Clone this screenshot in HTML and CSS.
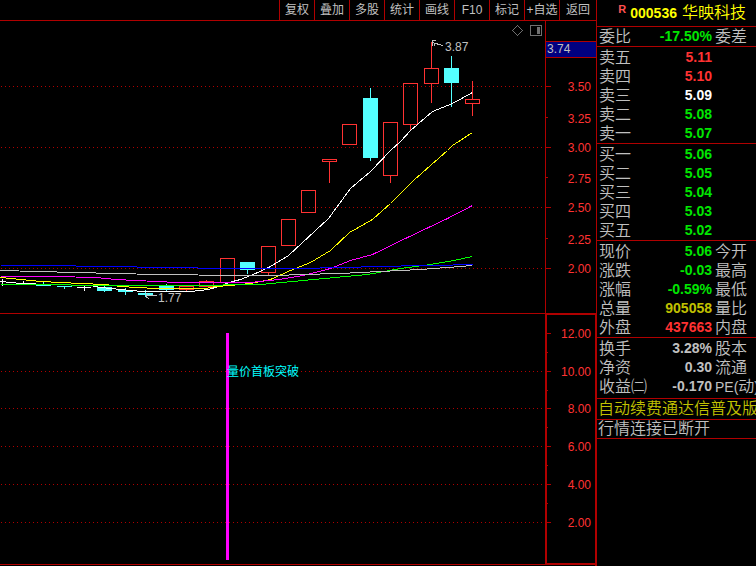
FILE: index.html
```
<!DOCTYPE html>
<html lang="zh-CN">
<head>
<meta charset="utf-8">
<title>000536 华映科技</title>
<link rel="stylesheet" href="styles.css">
</head>
<body>
<div class="app">
<main class="main">
<nav class="toolbar">
<button>复权</button><button>叠加</button><button>多股</button><button>统计</button><button>画线</button><button>F10</button><button>标记</button><button>+自选</button><button>返回</button>
</nav>
<svg class="chart" viewBox="0 21 596 294" role="img" aria-label="K线">
<g class="grid"><path d="M1 86.5H545M1 147.5H545M1 207.5H545M1 268.5H545"/></g>
<g class="frame"><path d="M545.5 21V313M0 313.5H545M546 86.5h5M546 117.5h2M546 147.5h5M546 177.5h2M546 207.5h5M546 238.5h2M546 268.5h5"/><path class="thick" d="M545 314H596"/></g>
<rect class="cursor-box" x="546" y="42" width="50" height="15"/>
<path class="frame" d="M546 41.5H596M546 57.5H596"/>
<g class="candle up">
<path d="M220.5 258.5h14v24h-14zM261.5 246.5h14v26h-14zM268.5 273v2M281.5 219.5h14v26h-14zM301.5 190.5h14v22h-14zM322.5 159.5h14v2h-14zM329.5 162v21M342.5 124.5h14v20h-14zM383.5 122.5h14v53h-14zM390.5 176v7M403.5 83.5h14v41h-14zM410.5 125v6M424.5 68.5h14v15h-14zM431.5 42v26M431.5 84v19M465.5 99.5h14v4h-14zM472.5 81v18M472.5 104v12M179.5 286.5h14v3h-14zM186.5 290v1M199.5 281.5h14v5h-14zM206.5 280v1"/>
</g>
<g class="candle down">
<path class="body" d="M240 262h15v8h-15zM363 98h15v60h-15zM444 68h15v15h-15zM36 284h15v2h-15zM57 286h15v1h-15zM97 287h15v4h-15zM118 290h15v2h-15zM138 293h15v2h-15zM159 286h15v4h-15z"/>
<path class="wick" d="M247.5 270v4M370.5 88v73M451.5 56v51M43.5 281v3M64.5 286v3M104.5 286v6M125.5 288v7M145.5 290v7M166.5 284v7"/>
</g>
<path class="candle flat" d="M2.500 279v7M16 283.500h14M23.500 281v4M77 287.500h14M84.500 285v6"/>
<g transform="translate(0.5 0.5)">
<polyline class="ma white" points="0,281 10,282 20,283 50,284 90,285 100,287 110,288 120,289 130,290 142,291 190,291 208,289 218,286 232,281 240,279 255,273 270,266 288,255 328,218 350,188 370,171 390,150 400,141 410,130 432,111 452,103 472,92"/>
<polyline class="ma yellow" points="0,277 20,279 40,281 60,282 80,283 105,284 120,286 136,287 156,288 205,288 215,286 230,285 250,283 270,279 290,270 310,262 330,250 349,232 372,219 390,203 413,180 447,150 452,145 472,132"/>
<polyline class="ma magenta" points="0,276 54,276 95,277 115,279 156,281 177,282 250,282 278,279 303,275 330,268 350,260 372,254 407,237 447,218 472,205"/>
<polyline class="ma green" points="0,284 50,284 90,285 215,285 230,284 260,284 313,279 367,274 400,268 430,264 453,260 472,256"/>
<polyline class="ma silver" points="0,270 75,272 115,273 156,274 238,275 278,275 300,274 340,273 380,271 420,269 460,266 472,265"/>
<path class="ma blue" d="M0 265H75M75 266H136M136 267H197M197 268H319M319 267H360M360 266H400M400 265H452M452 264H472"/>
</g>
<path class="leader" d="M432 42.500L443 45.500M432 46V40.500h4M434 44l1 2M146 295.500h11M146 293v5M147 297l2 2"/>
<text class="note" x="445" y="51">3.87</text>
<text class="note" x="158" y="302">1.77</text>
<text class="note" x="547" y="53">3.74</text>
<g class="tool-icons"><path d="M517.500 25.500l5 5l-5 5l-5-5z"/><rect x="530.500" y="25.500" width="11" height="10" rx="1"/><path class="fill" d="M537 27h3v7h-3z"/></g>
<g class="scale"><text x="591" y="91">3.50</text><text x="591" y="123">3.25</text><text x="591" y="152">3.00</text><text x="591" y="183">2.75</text><text x="591" y="212">2.50</text><text x="591" y="244">2.25</text><text x="591" y="273">2.00</text></g>
</svg>
<svg class="chart" viewBox="0 315 596 251" role="img" aria-label="量价首板突破">
<g class="grid"><path d="M1 371.5H545M1 408.5H545M1 446.5H545M1 484.5H545M1 522.5H545"/></g>
<g class="frame"><path d="M0 564.5H545M547 333.5h4M547 371.5h4M547 408.5h4M547 446.5h4M547 484.5h4M547 522.5h4M547 352.5h1M547 390.5h1M547 427.5h1M547 465.5h1M547 503.5h1"/><path class="thick" d="M546 315V564M545 564H596"/></g>
<rect class="signal" x="226" y="333" width="3" height="227"/>
<text class="signal-label" x="227" y="376">量价首板突破</text>
<g class="scale"><text x="591" y="338">12.00</text><text x="591" y="376">10.00</text><text x="591" y="413">8.00</text><text x="591" y="451">6.00</text><text x="591" y="489">4.00</text><text x="591" y="527">2.00</text></g>
<path class="frame" d="M595.500 315V566"/>
</svg>
</main>
<aside class="side">
<header class="stock"><sup>R</sup><b>000536</b><span>华映科技</span></header>
<section class="block ratio"><table><tr><th>委比</th><td class="green">-17.50%</td><th>委差</th></tr></table></section>
<section class="block"><table>
<tr><th>卖五</th><td class="red">5.11</td><th></th></tr>
<tr><th>卖四</th><td class="red">5.10</td><th></th></tr>
<tr><th>卖三</th><td class="white">5.09</td><th></th></tr>
<tr><th>卖二</th><td class="green">5.08</td><th></th></tr>
<tr><th>卖一</th><td class="green">5.07</td><th></th></tr>
</table></section>
<section class="block"><table>
<tr><th>买一</th><td class="green">5.06</td><th></th></tr>
<tr><th>买二</th><td class="green">5.05</td><th></th></tr>
<tr><th>买三</th><td class="green">5.04</td><th></th></tr>
<tr><th>买四</th><td class="green">5.03</td><th></th></tr>
<tr><th>买五</th><td class="green">5.02</td><th></th></tr>
</table></section>
<section class="block"><table>
<tr><th>现价</th><td class="green">5.06</td><th>今开</th></tr>
<tr><th>涨跌</th><td class="green">-0.03</td><th>最高</th></tr>
<tr><th>涨幅</th><td class="green">-0.59%</td><th>最低</th></tr>
<tr><th>总量</th><td class="gold">905058</td><th>量比</th></tr>
<tr><th>外盘</th><td class="red">437663</td><th>内盘</th></tr>
</table></section>
<section class="block finance"><table>
<tr><th>换手</th><td>3.28%</td><th>股本</th></tr>
<tr><th>净资</th><td>0.30</td><th>流通</th></tr>
<tr><th>收益㈡</th><td>-0.170</td><th><span class="latin">PE(</span>动<span class="latin">)</span></th></tr>
</table></section>
<p class="message gold">自动续费通达信普及版</p>
<p class="message status">行情连接已断开</p>
</aside>
</div>
</body>
</html>
```
FILE: styles.css
```
* { box-sizing: border-box; }
body {
  margin: 0;
  background: #000;
  color: #c0c0c0;
  font-family: "Liberation Sans", "Noto Sans CJK SC", sans-serif;
  overflow: hidden;
}
.app {
  display: grid;
  grid-template-columns: minmax(0, 1fr) 160px;
  min-height: 100vh;
}
.toolbar {
  display: flex;
  justify-content: flex-end;
  height: 21px;
  border-bottom: 1px solid #b00000;
}
.toolbar button {
  width: 35px;
  padding: 0;
  border: 0;
  border-left: 1px solid #b00000;
  background: none;
  color: #c0c0c0;
  font: 400 12px/20px "Liberation Sans", "Noto Sans CJK SC", sans-serif;
  white-space: nowrap;
}
.toolbar button:last-child { width: 37px; }
.chart { display: block; width: 100%; height: auto; }
.chart path, .chart polyline, .chart rect { fill: none; shape-rendering: crispEdges; }
.grid path { stroke: #b00000; stroke-dasharray: 1 3; }
.frame { stroke: #b00000; }
.frame .thick { stroke-width: 2; }
.chart .cursor-box { fill: #000080; }
.up { stroke: #ff3232; }
.down .wick { stroke: #54ffff; }
.chart .down .body { fill: #54ffff; }
.flat { stroke: #fff; }
.ma.white { stroke: #fff; }
.ma.yellow { stroke: #ff0; }
.ma.magenta { stroke: #f0f; }
.ma.green { stroke: #0f0; }
.ma.silver { stroke: #c0c0c0; }
.ma.blue { stroke: #00f; }
.leader { stroke: #c0c0c0; }
.note { fill: #c0c0c0; font-size: 12px; }
.scale { fill: #ff3232; font-size: 12px; text-anchor: end; }
.tool-icons { stroke: #707070; }
.chart .tool-icons .fill { fill: #707070; stroke: none; }
.chart .signal { fill: #f0f; }
.signal-label { fill: #0ff; font-size: 12px; }
.side {
  min-width: 0;
  border-left: 1px solid #b00000;
  overflow: hidden;
}
.stock {
  display: flex;
  justify-content: flex-end;
  height: 26px;
  padding-right: 10px;
  color: #ff0;
  font-size: 16px;
  font-weight: 350;
  line-height: 26px;
}
.stock sup { margin-right: 4px; color: #ff5050; font-size: 11px; font-weight: bold; line-height: 18px; }
.stock b { margin-right: 5px; font-size: 14px; font-weight: 700; }
.block { padding: 1px 0 0 2px; border-bottom: 1px solid #b00000; }
.ratio { padding-top: 0; border-top: 1px solid #b00000; }
.finance { padding-bottom: 2px; }
table { width: 100%; border-spacing: 0; table-layout: fixed; }
tr { height: 19px; }
th, td { padding: 0; line-height: 19px; white-space: nowrap; }
th { width: 46px; font-size: 16px; font-weight: 350; text-align: left; }
th:last-child { width: 41px; }
td { padding-right: 3px; font-size: 14px; font-weight: bold; text-align: right; }
.latin { font-size: 14px; font-weight: 500; line-height: 1; }
.message {
  height: 21px;
  margin: 0;
  padding-left: 1px;
  border-bottom: 1px solid #b00000;
  font-size: 16px;
  font-weight: 350;
  line-height: 19px;
  white-space: nowrap;
}
.status { height: 19px; line-height: 18px; }
.red { color: #ff3232; }
.green { color: #00e600; }
.white { color: #fff; }
.gold { color: #c0c000; }
```
